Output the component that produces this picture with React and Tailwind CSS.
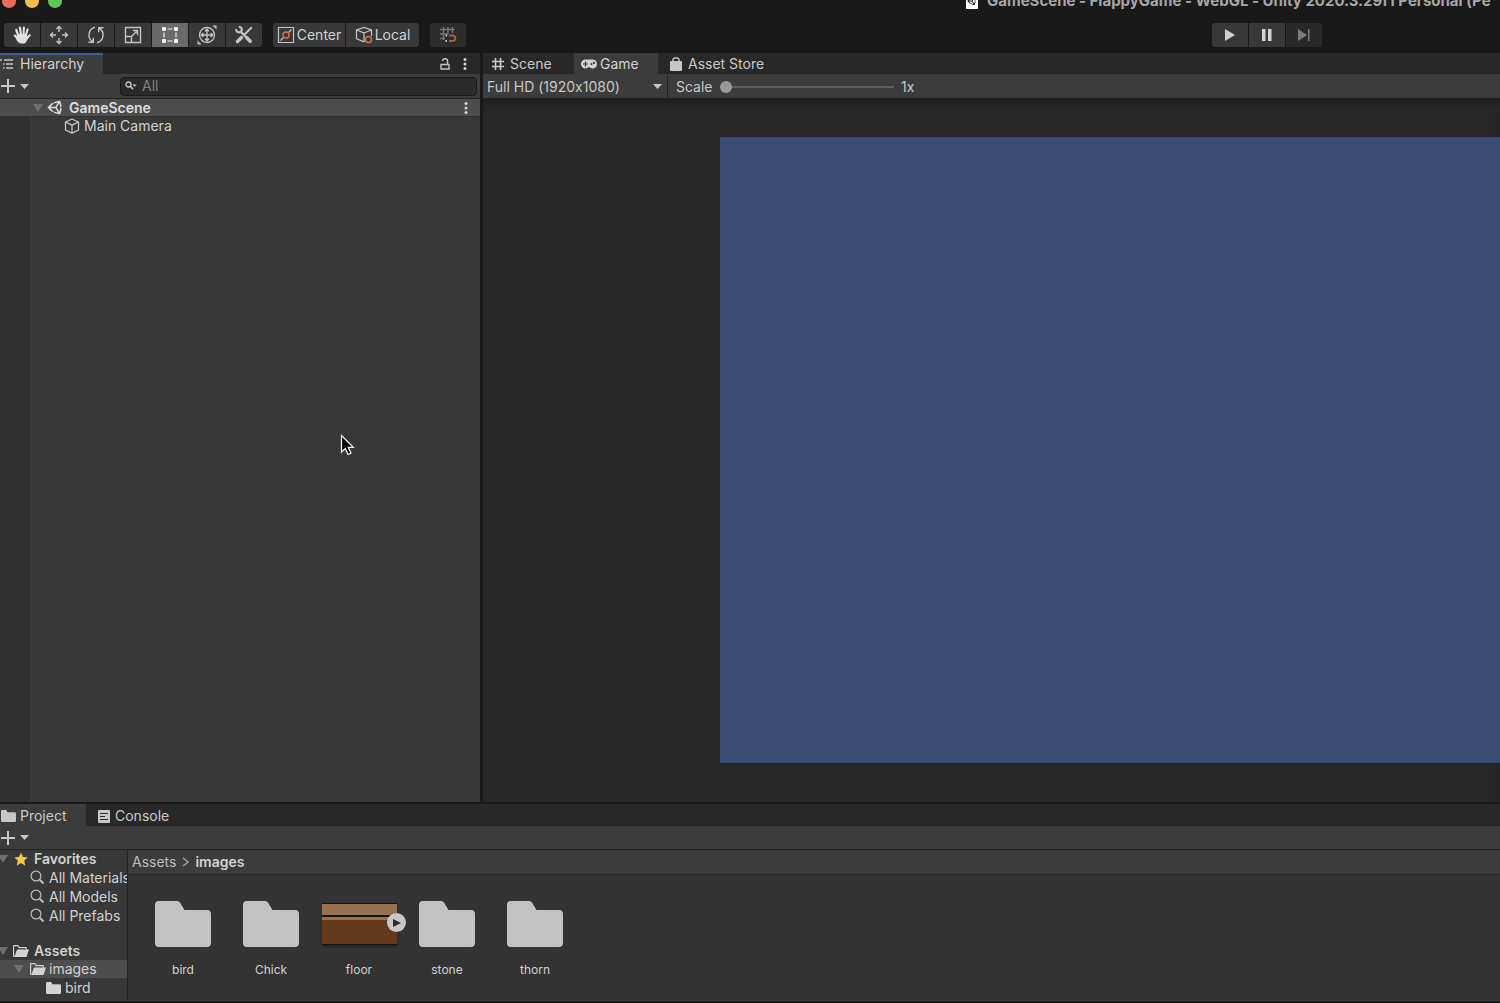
import React from "react";
import { FaUnity } from "react-icons/fa";

const Svg = ({ w = 24, h = 24, className = "", children, box }) => (
  <svg
    width={w}
    height={h}
    viewBox={box || `0 0 ${w} ${h}`}
    fill="none"
    stroke="currentColor"
    className={`shrink-0 ${className}`}
    aria-hidden="true"
  >
    {children}
  </svg>
);

const HandIcon = () => (
  <Svg w={20} h={20}>
    <g strokeLinecap="round" strokeWidth="2.2">
      <path d="M6.500 11 4.300 5M9 10 7.900 2.500M11.500 10 11.900 2.500M13.600 11l2-6.500M14.300 14l3.400-3.800M6.500 14.500 2.800 10.500" />
    </g>
    <path
      d="M5 9h10v3l1.400-.5c-1 3.500-2.400 7-4.400 7H9c-2.200 0-3.800-2.300-5-4.500z"
      fill="currentColor"
      stroke="none"
    />
  </Svg>
);

const MoveIcon = () => (
  <Svg w={20} h={20} className="text-[#c4c4c4]">
    <path
      strokeWidth="1.4"
      d="M10 1.500V7M10 13v5.500M1.500 10H7M13 10h5.500M7.500 4 10 1.500 12.500 4M7.500 16l2.500 2.500 2.500-2.500M4 7.500 1.500 10 4 12.500M16 7.500l2.500 2.500-2.500 2.500"
    />
  </Svg>
);

const RotateIcon = () => (
  <Svg w={20} h={20} className="text-[#c4c4c4]">
    <path
      strokeWidth="1.4"
      d="M9 2.300A8 8 0 0 0 6.500 16.700M2.500 17.300h4.800v-4.600M11 17.700A8 8 0 0 0 13.500 3.300M17.500 2.700h-4.800v4.600"
    />
  </Svg>
);

const ScaleIcon = () => (
  <Svg w={18} h={18} className="text-[#c4c4c4]">
    <path strokeWidth="1.400" d="M1.500 1.500h15v15h-15zM1.500 10.500h6v6M8 10l5.500-5.500M8.800 4.500h4.700v4.700" />
  </Svg>
);

const RectIcon = () => (
  <Svg w={18} h={18} className="text-[#f2f2f2]">
    <path strokeWidth="1.200" d="M6.500 3h5M6.500 15h5M3 6.500v5M15 6.500v5" />
    <g fill="currentColor" stroke="none">
      <rect x="1" y="1" width="4" height="4" rx="1" />
      <rect x="13" y="1" width="4" height="4" rx="1" />
      <rect x="1" y="13" width="4" height="4" rx="1" />
      <rect x="13" y="13" width="4" height="4" rx="1" />
    </g>
  </Svg>
);

const TransformIcon = () => (
  <Svg w={20} h={20} className="text-[#c4c4c4]">
    <circle cx="10" cy="10" r="7.500" strokeWidth="1.300" />
    <path
      strokeWidth="1.400"
      d="M10 4.500v11M4.500 10h11M8 6.300l2-2 2 2M8 13.700l2 2 2-2M6.300 8l-2 2 2 2M13.700 8l2 2-2 2"
    />
    <path d="M15.500.5h4v4zM.5 15.500v4h4z" fill="currentColor" stroke="none" />
  </Svg>
);

const ToolsIcon = () => (
  <Svg w={20} h={20} className="text-[#c4c4c4]">
    <path strokeWidth="2.400" d="M6.500 6.500l6 6" />
    <path strokeWidth="3.600" strokeLinecap="round" d="M13 13l3.200 3.200" />
    <path strokeWidth="2.200" d="M2.200 4.200a2.800 2.800 0 1 0 2.600-2.400" />
    <path strokeWidth="2" strokeLinecap="round" d="M17.300 2.700 10 10" />
    <path strokeWidth="3.400" strokeLinecap="round" d="M7.500 12.500l-4 4" />
  </Svg>
);

const CenterIcon = () => (
  <Svg w={18} h={18} className="text-[#c4c4c4]">
    <path strokeWidth="1.200" d="M1.500 1.500h15v15h-15zM3.500 14.500l3-3M11.500 6.500l3-3" />
    <circle cx="9" cy="9" r="3" stroke="#d9704a" strokeWidth="1.400" />
  </Svg>
);

const LocalIcon = () => (
  <Svg w={18} h={18} className="text-[#c4c4c4]">
    <path strokeWidth="1.300" d="M9 16 1.500 12.500v-8.500L9 1.500l7.500 2.500v6M1.500 4 9 7v9M9 7l7.500-3" />
    <circle cx="13.500" cy="13.500" r="3" stroke="#d9704a" strokeWidth="1.500" />
  </Svg>
);

const SnapIcon = () => (
  <Svg w={18} h={18} className="text-[#777]">
    <path strokeWidth="1.400" d="M4.500 1v13M9 1v7M13.500 1v6M1 3.500h14.500M1 8h8M1 12.500h5" />
    <path strokeWidth="2" stroke="#a55e42" d="M10 9.500h3.500a2.700 2.700 0 0 1 0 5.500H10" />
    <path strokeWidth="2" stroke="#ccc" d="M6.500 9.500h1.500M6.500 15h1.500" />
  </Svg>
);

const CubeIcon = () => (
  <Svg w={16} h={16} className="text-[#c4c4c4]">
    <path strokeWidth="1.300" strokeLinejoin="round" d="M8 1l6.500 3v8L8 15.200 1.500 12V4zM1.500 4 8 7.200 14.500 4M8 7.200v8" />
  </Svg>
);

const ListIcon = () => (
  <Svg w={14} h={12} className="text-[#c4c4c4]">
    <path strokeWidth="1.300" d="M4 2h9M6 6h7M6 10h7M0 2h2M3 6h1.500M3 10h1.500" />
  </Svg>
);

const LockIcon = () => (
  <Svg w={10} h={12}>
    <path strokeWidth="1.400" d="M1 6.500h8v4.500H1zM7.500 6.500V3.500a2.500 2.500 0 0 0-5-.5" />
  </Svg>
);

const DotsIcon = () => (
  <Svg w={4} h={12} className="text-[#d6d6d6]">
    <g fill="currentColor" stroke="none">
      <circle cx="2" cy="1.600" r="1.500" />
      <circle cx="2" cy="6" r="1.500" />
      <circle cx="2" cy="10.400" r="1.500" />
    </g>
  </Svg>
);

const HashIcon = () => (
  <Svg w={12} h={14}>
    <path strokeWidth="1.600" d="M3.500 1v12M8.500 1v12M0 4.500h12M0 9.500h12" />
  </Svg>
);

const GamepadIcon = () => (
  <Svg w={16} h={10}>
    <path
      fill="currentColor"
      stroke="none"
      fillRule="evenodd"
      d="M4.500.5C2 .5 0 2.500 0 5s2 4.500 4.500 4.500c1.500 0 2.500-.8 3.500-1.700 1 .9 2 1.700 3.500 1.700C14 9.500 16 7.500 16 5S14 .5 11.500.5zM3.900 2.500h1.200v1.900H7v1.200H5.100v1.900H3.900V5.600H2V4.400h1.900zM10.500 4a1.100 1.100 0 1 0 0 2.200 1.100 1.100 0 0 0 0-2.200zM13 2.800A1.100 1.100 0 1 0 13 5a1.100 1.100 0 0 0 0-2.200z"
    />
  </Svg>
);

const BagIcon = () => (
  <Svg w={12} h={14}>
    <rect x="0" y="4" width="12" height="10" rx="1" fill="currentColor" stroke="none" />
    <path strokeWidth="1.400" d="M3 6V3a2 2 0 0 1 2-2h2a2 2 0 0 1 2 2v3" />
  </Svg>
);

const ConsoleIcon = () => (
  <Svg w={12} h={13}>
    <rect width="12" height="13" rx="1" fill="currentColor" stroke="none" />
    <path stroke="#282828" strokeWidth="1.200" d="M2 3.500h8M2 6.500h5M2 9.500h8" />
  </Svg>
);

const SmallFolder = () => (
  <Svg w={15} h={12}>
    <path d="M0 1.200Q0 0 1.200 0H5l1.600 2.300h7.200q1.200 0 1.200 1.200v7.300q0 1.200-1.200 1.200H1.200Q0 12 0 10.800z" fill="currentColor" stroke="none" />
  </Svg>
);

const OpenFolder = () => (
  <Svg w={16} h={12}>
    <path strokeWidth="1.200" d="M1.500 11.400H1a.4.400 0 0 1-.4-.4V1.200Q.6.600 1.200.6h3.600l1.500 2h6.400q.6 0 .6.600v1.500" />
    <path d="M4 4.600h12L13.500 12H1.300z" fill="currentColor" stroke="none" />
  </Svg>
);

const SearchIcon = () => (
  <Svg w={15} h={15} className="text-[#bdbdbd]">
    <circle cx="6" cy="6" r="4.900" strokeWidth="1.200" />
    <path strokeWidth="2" d="M9.800 9.800l3.700 3.700" />
  </Svg>
);

const FilterIcon = () => (
  <Svg w={12} h={10} className="text-[#c4c4c4]">
    <circle cx="3.500" cy="3.500" r="2.500" strokeWidth="1.300" />
    <path strokeWidth="1.700" d="M5.300 5.300 8 8.300" />
    <path d="M7.500 3.500h4L9.500 6z" fill="currentColor" stroke="none" />
  </Svg>
);

const Caret = ({ className = "" }) => (
  <Svg w={9} h={5} className={className}>
    <path d="M0 0h9L4.500 5z" fill="currentColor" stroke="none" />
  </Svg>
);

const Fold = () => (
  <Svg w={10} h={8} className="text-[#707070]">
    <path d="M0 0h10L5 8z" fill="currentColor" stroke="none" />
  </Svg>
);

const StarIcon = () => (
  <Svg w={14} h={14}>
    <path d="M7 .5l2 4.400 4.700.5-3.500 3.200 1 4.900L7 11l-4.200 2.500 1-4.900L.3 5.400 5 4.900z" fill="#f5c94c" stroke="none" />
  </Svg>
);

const AddButton = () => (
  <button type="button" aria-label="Add" className="flex items-center gap-[5px] text-[#c8c8c8]">
    <Svg w={15} h={14}>
      <path strokeWidth="2" d="M1 7h14M8 0v14" />
    </Svg>
    <Caret />
  </button>
);

const BigFolder = () => (
  <Svg w={56} h={46} className="text-[#c2c2c2]">
    <path d="M0 4Q0 0 4 0h18q2 0 3 1.500L29.500 9H52q4 0 4 4v29q0 4-4 4H4q-4 0-4-4z" fill="currentColor" stroke="none" />
  </Svg>
);

const tools = [
  ["Hand", HandIcon],
  ["Move", MoveIcon],
  ["Rotate", RotateIcon],
  ["Scale", ScaleIcon],
  ["Rect", RectIcon],
  ["Transform", TransformIcon],
  ["Custom tools", ToolsIcon],
];

const barButton = "flex h-6 items-center justify-center bg-[#383838] text-[#d2d2d2]";

function TitleBar() {
  return (
    <header className="flex h-[23px] items-start justify-between overflow-hidden">
      <div className="-mt-[6px] ml-[2px] flex gap-[9px]">
        <span className="size-[14px] rounded-full bg-[#ed6a5e]" />
        <span className="size-[14px] rounded-full bg-[#f4bf4f]" />
        <span className="size-[14px] rounded-full bg-[#61c554]" />
      </div>
      <div className="-mt-[9px] flex w-[534px] items-center gap-[9px] overflow-hidden">
        <span className="flex h-4 w-3 shrink-0 items-end justify-center bg-white pb-[3px] text-[#222]">
          <FaUnity size={10} />
        </span>
        <h1 className="text-[15px] leading-5 font-bold whitespace-nowrap text-[#a6a6a6]">
          GameScene - FlappyGame - WebGL - Unity 2020.3.29f1 Personal (Pe
        </h1>
      </div>
    </header>
  );
}

function Toolbar() {
  return (
    <div className="flex h-[30px] items-start pl-1">
      <div className="flex gap-px overflow-hidden rounded-[3px]">
        {tools.map(([name, Icon]) => (
          <button
            key={name}
            type="button"
            aria-label={name}
            className={`flex h-6 w-9 items-center justify-center text-[#e0e0e0] ${name === "Rect" ? "bg-[#6a6a6a]" : "bg-[#383838]"}`}
          >
            <Icon />
          </button>
        ))}
      </div>
      <div className="ml-[11px] flex gap-px overflow-hidden rounded-[3px]">
        <button type="button" className={`${barButton} w-[72px] gap-[2px]`}>
          <CenterIcon />
          Center
        </button>
        <button type="button" className={`${barButton} w-[73px] gap-[2px]`}>
          <LocalIcon />
          Local
        </button>
      </div>
      <button
        type="button"
        aria-label="Grid snapping"
        className="ml-[11px] flex h-6 w-9 items-center justify-center rounded-[3px] bg-[#2c2c2c]"
      >
        <SnapIcon />
      </button>
      <div className="mr-[178px] ml-auto flex gap-px overflow-hidden rounded-[3px]">
        <button type="button" aria-label="Play" className={`${barButton} w-9`}>
          <Svg w={12} h={14}>
            <path d="M1 1v12l10-6z" fill="currentColor" stroke="none" />
          </Svg>
        </button>
        <button type="button" aria-label="Pause" className={`${barButton} w-9`}>
          <Svg w={10} h={12}>
            <path d="M0 0h3.500v12H0zM6 0h3.500v12H6z" fill="currentColor" stroke="none" />
          </Svg>
        </button>
        <button type="button" aria-label="Step" className="flex h-6 w-9 items-center justify-center bg-[#292929] text-[#7b7b7b]">
          <Svg w={12} h={12}>
            <path d="M0 0v12l9-6zM10 0h1.500v12H10z" fill="currentColor" stroke="none" />
          </Svg>
        </button>
      </div>
    </div>
  );
}

function Hierarchy() {
  return (
    <section className="flex w-[480px] shrink-0 flex-col bg-[#383838]">
      <div className="flex h-[21px] items-stretch bg-[#282828]">
        <button
          type="button"
          className="flex w-[103px] items-center gap-[6px] border-t-2 border-[#3b5f94] bg-[#3c3c3c] pb-px text-[#d2d2d2]"
        >
          <ListIcon />
          Hierarchy
        </button>
        <div className="ml-auto flex items-center gap-[13px] pr-[13px] text-[#c4c4c4]">
          <button type="button" aria-label="Lock">
            <LockIcon />
          </button>
          <button type="button" aria-label="Panel menu">
            <DotsIcon />
          </button>
        </div>
      </div>
      <div className="flex h-[25px] items-center justify-between border-b border-[#232323] bg-[#3c3c3c] pr-[3px]">
        <AddButton />
        <label className="flex h-[19px] w-[357px] items-center gap-[5px] rounded-[4px] border border-[#1a1a1a] bg-[#2a2a2a] pl-1">
          <FilterIcon />
          <input
            type="text"
            aria-label="Search hierarchy"
            placeholder="All"
            className="min-w-0 flex-1 bg-transparent leading-4 outline-none placeholder:text-[#808080]"
          />
        </label>
      </div>
      <div className="flex flex-1 flex-col">
        <div className="flex h-[18px] items-center border-b border-[#303030] bg-[#4d4d4d] pr-3 pl-[33px] font-semibold text-[#dedede]">
          <Fold />
          <FaUnity size={17} className="mr-[5px] ml-1 shrink-0" />
          GameScene
          <button type="button" aria-label="Scene menu" className="ml-auto">
            <DotsIcon />
          </button>
        </div>
        <div className="flex flex-1">
          <div className="w-[30px] bg-[#303030]" />
          <div className="flex h-[18px] items-center gap-1 pl-[34px] text-[#d2d2d2]">
            <CubeIcon />
            Main Camera
          </div>
        </div>
      </div>
    </section>
  );
}

function GameView() {
  return (
    <section className="flex min-w-0 flex-1 flex-col bg-[#282828] text-[#c8c8c8]">
      <div className="flex h-[21px] items-stretch">
        <button type="button" className="flex w-[91px] items-center gap-[6px] pt-px pl-[9px]">
          <HashIcon />
          Scene
        </button>
        <button type="button" className="flex w-[84px] items-center gap-[3px] bg-[#3c3c3c] pt-px pl-[7px] text-[#d2d2d2]">
          <GamepadIcon />
          Game
        </button>
        <button type="button" className="flex items-center gap-[6px] pt-px pl-3">
          <BagIcon />
          Asset Store
        </button>
      </div>
      <div className="flex h-[25px] items-center border-b border-[#232323] bg-[#3c3c3c] pt-px">
        <div className="flex h-full w-[185px] items-center border-r border-[#232323] pr-[5px] pl-1">
          <select aria-label="Aspect" className="min-w-0 flex-1 appearance-none bg-transparent outline-none">
            <option>Full HD (1920x1080)</option>
          </select>
          <Caret />
        </div>
        <label htmlFor="scale" className="w-[52px] pl-2">
          Scale
        </label>
        <input
          id="scale"
          type="range"
          min="1"
          max="5"
          defaultValue="1"
          className="h-3 w-[174px] appearance-none bg-transparent bg-[linear-gradient(#5e5e5e,#5e5e5e)] bg-[length:100%_2px] bg-center bg-no-repeat [&::-webkit-slider-thumb]:size-3 [&::-webkit-slider-thumb]:appearance-none [&::-webkit-slider-thumb]:rounded-full [&::-webkit-slider-thumb]:bg-[#999]"
        />
        <span className="pl-[7px]">1x</span>
      </div>
      <div className="flex flex-1 pt-[38px] pb-[39px] pl-[237px] shadow-[inset_0_6px_6px_-2px_#1e1e1e]">
        <div className="min-h-[300px] flex-1 bg-[#3b4c74]" />
      </div>
    </section>
  );
}

const searches = ["All Materials", "All Models", "All Prefabs"];
const assets = ["bird", "Chick", "floor", "stone", "thorn"];

function Floor() {
  return (
    <div className="relative h-[42px] w-[75px] border-y border-[#151515] bg-[#65381a] shadow-[0_2px_2px_#262626]">
      <div className="h-[11px] bg-[#977250]" />
      <div className="h-[2px] bg-[#1d130c]" />
      <div className="h-[3px] bg-[#977250]" />
      <button
        type="button"
        aria-label="Expand floor"
        className="absolute top-[9px] -right-[9px] flex size-[19px] items-center justify-center rounded-full bg-[#c8c8c8] text-[#2c2c2c]"
      >
        <Svg w={9} h={8}>
          <path d="M1 0v8l8-4z" fill="currentColor" stroke="none" />
        </Svg>
      </button>
    </div>
  );
}

function Project() {
  return (
    <section className="mt-[2px] bg-[#3c3c3c] text-[#d2d2d2]">
      <div className="flex h-[22px] items-stretch bg-[#282828]">
        <button type="button" className="flex w-[86px] items-center gap-1 bg-[#3c3c3c] pt-[2px] pl-px text-[#c8c8c8]">
          <SmallFolder />
          Project
        </button>
        <button type="button" className="flex items-center gap-[5px] pt-[2px] pl-3 text-[#c8c8c8]">
          <ConsoleIcon />
          Console
        </button>
      </div>
      <div className="flex h-6 items-center border-b border-[#232323]">
        <AddButton />
      </div>
      <div className="flex h-[150px]">
        <nav className="-mt-px flex w-[127px] shrink-0 flex-col overflow-hidden border-t border-[#232323] bg-[#383838] whitespace-nowrap">
          <div className="-ml-[2px] flex h-[18px] shrink-0 items-center font-semibold">
            <Fold />
            <span className="mr-[6px] ml-[6px]">
              <StarIcon />
            </span>
            Favorites
          </div>
          {searches.map((s) => (
            <div key={s} className="flex h-[19px] shrink-0 items-center gap-1 pl-[30px]">
              <SearchIcon />
              {s}
            </div>
          ))}
          <div className="mt-4 -ml-[2px] flex h-[19px] shrink-0 items-center gap-[5px] font-semibold">
            <Fold />
            <OpenFolder />
            Assets
          </div>
          <div className="flex h-[18px] shrink-0 items-center bg-[#4d4d4d] pl-[14px]">
            <Fold />
            <span className="mr-[3px] ml-[6px]">
              <OpenFolder />
            </span>
            images
          </div>
          <div className="flex h-[19px] shrink-0 items-center gap-1 pl-[46px]">
            <SmallFolder />
            bird
          </div>
        </nav>
        <div className="flex min-w-0 flex-1 flex-col border-l border-[#232323] bg-[#333]">
          <div className="flex h-[25px] shrink-0 items-center gap-[6px] border-b border-[#282828] bg-[#3c3c3c] pl-1">
            <a href="#assets" className="text-[#bdbdbd]">
              Assets
            </a>
            <Svg w={7} h={10} className="text-[#9a9a9a]">
              <path strokeWidth="1.600" d="M1 1l5 4-5 4" />
            </Svg>
            <a href="#images" className="font-semibold">
              images
            </a>
          </div>
          <div className="flex pt-[26px] pl-[11px]">
            {assets.map((a) => (
              <figure key={a} className="flex w-[88px] flex-col items-center">
                <div className="flex h-[46px] items-center">{a === "floor" ? <Floor /> : <BigFolder />}</div>
                <figcaption className="mt-[15px] text-xs leading-4">{a}</figcaption>
              </figure>
            ))}
          </div>
        </div>
      </div>
      <div className="h-[3px] border-t border-[#3c3c3c] bg-[#191919]" />
    </section>
  );
}

export default function App() {
  return (
    <div className="relative flex min-h-screen flex-col overflow-hidden bg-[#191919] font-['Inter',sans-serif] text-sm leading-[18px] [font-feature-settings:'calt'_0]">
      <TitleBar />
      <Toolbar />
      <main className="flex flex-1 gap-[3px]">
        <Hierarchy />
        <GameView />
      </main>
      <Project />
      <svg width="15" height="22" viewBox="0 0 15 22" className="absolute top-[434px] left-[340px]" aria-hidden="true">
        <path d="M1.500 1.500v16.500l3.800-3.500 2.700 6 3-1.400-2.700-5.700h5z" fill="#050505" stroke="#f0f0f0" strokeWidth="1.300" />
      </svg>
    </div>
  );
}
